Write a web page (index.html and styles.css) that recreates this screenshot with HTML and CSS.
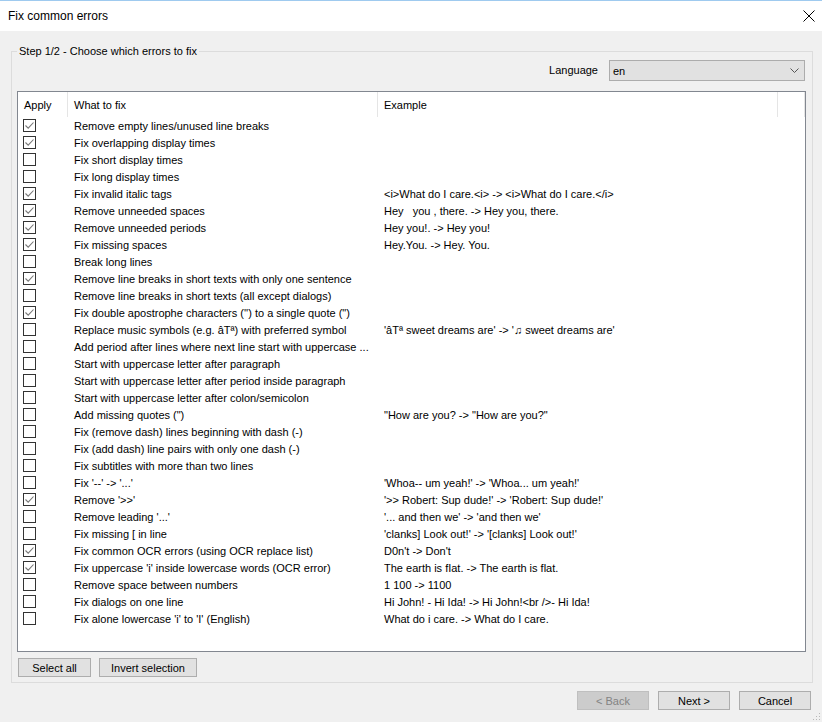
FILE: index.html
```html
<!DOCTYPE html>
<html>
<head>
<meta charset="utf-8">
<link rel="stylesheet" href="styles.css">
</head>
<body>
<div class="window">
  <div class="titlebar">
    <span class="title">Fix common errors</span>
    <svg class="close" width="12" height="12" viewBox="0 0 12 12"><path d="M0.5 0.5 L11.5 11.5 M11.5 0.5 L0.5 11.5" stroke="#000" stroke-width="1" fill="none"/></svg>
  </div>
  <div class="content">
    <div class="group">
      <span class="legend">Step 1/2 - Choose which errors to fix</span>
      <div class="lang-row">
        <span class="lang-label">Language</span>
        <div class="combo"><span>en</span>
          <svg width="9" height="5" viewBox="0 0 9 5"><path d="M0.5 0.5 L4.5 4.5 L8.5 0.5" stroke="#555" fill="none"/></svg>
        </div>
      </div>
      <div class="list">
        <div class="header">
          <div class="hcell c1">Apply</div>
          <div class="hcell c2">What to fix</div>
          <div class="hcell c3">Example</div>
          <div class="hcell c4"></div>
        </div>
        <div class="rows" id="rows"></div>
      </div>
      <div class="list-buttons">
        <button class="btn b-select">Select all</button>
        <button class="btn b-invert">Invert selection</button>
      </div>
    </div>
    <div class="footer">
      <button class="btn disabled">&lt; Back</button>
      <button class="btn">Next &gt;</button>
      <button class="btn">Cancel</button>
    </div>
  </div>
  <div class="grip"></div>
</div>
<script src="app.js"></script>
</body>
</html>
```
FILE: app.js
```js
const data = [
  [1, "Remove empty lines/unused line breaks", ""],
  [1, "Fix overlapping display times", ""],
  [0, "Fix short display times", ""],
  [0, "Fix long display times", ""],
  [1, "Fix invalid italic tags", "<i>What do I care.<i> -> <i>What do I care.</i>"],
  [1, "Remove unneeded spaces", "Hey   you , there. -> Hey you, there."],
  [1, "Remove unneeded periods", "Hey you!. -> Hey you!"],
  [1, "Fix missing spaces", "Hey.You. -> Hey. You."],
  [0, "Break long lines", ""],
  [1, "Remove line breaks in short texts with only one sentence", ""],
  [0, "Remove line breaks in short texts (all except dialogs)", ""],
  [1, "Fix double apostrophe characters ('') to a single quote (\")", ""],
  [0, "Replace music symbols (e.g. âTª) with preferred symbol", "'âTª sweet dreams are' -> '♫ sweet dreams are'"],
  [0, "Add period after lines where next line start with uppercase ...", ""],
  [0, "Start with uppercase letter after paragraph", ""],
  [0, "Start with uppercase letter after period inside paragraph", ""],
  [0, "Start with uppercase letter after colon/semicolon", ""],
  [0, "Add missing quotes (\")", "\"How are you? -> \"How are you?\""],
  [0, "Fix (remove dash) lines beginning with dash (-)", ""],
  [0, "Fix (add dash) line pairs with only one dash (-)", ""],
  [0, "Fix subtitles with more than two lines", ""],
  [0, "Fix '--' -> '...'", "'Whoa-- um yeah!' -> 'Whoa... um yeah!'"],
  [1, "Remove '>>'", "'>> Robert: Sup dude!' -> 'Robert: Sup dude!'"],
  [0, "Remove leading '...'", "'... and then we' -> 'and then we'"],
  [0, "Fix missing [ in line", "'clanks] Look out!' -> '[clanks] Look out!'"],
  [1, "Fix common OCR errors (using OCR replace list)", "D0n't -> Don't"],
  [1, "Fix uppercase 'i' inside lowercase words (OCR error)", "The earth is fIat. -> The earth is flat."],
  [0, "Remove space between numbers", "1 100 -> 1100"],
  [0, "Fix dialogs on one line", "Hi John! - Hi Ida! -> Hi John!<br />- Hi Ida!"],
  [0, "Fix alone lowercase 'i' to 'I' (English)", "What do i care. -> What do I care."]
];
const rows = document.getElementById('rows');
const check = '<svg width="11" height="11" viewBox="0 0 11 11"><path d="M1.5 5.5 L4.2 8.2 L9.5 2.5" stroke="#777" stroke-width="1.1" fill="none"/></svg>';
for (const [c, what, ex] of data) {
  const r = document.createElement('div');
  r.className = 'row';
  const cb = document.createElement('div');
  cb.className = 'cell c1';
  cb.innerHTML = '<span class="cb">' + (c ? check : '') + '</span>';
  const w = document.createElement('div');
  w.className = 'cell c2';
  w.textContent = what;
  const e = document.createElement('div');
  e.className = 'cell c3 ex';
  e.textContent = ex;
  r.append(cb, w, e);
  rows.appendChild(r);
}
```
FILE: styles.css
```css
* { box-sizing: border-box; }
html, body { margin: 0; padding: 0; }
body {
  width: 822px;
  height: 722px;
  background: #f0f0f0;
  font-family: "Liberation Sans", Arial, sans-serif;
  font-size: 11px;
  color: #000;
  overflow: hidden;
}
.window {
  position: relative;
  width: 822px;
  height: 722px;
  display: flex;
  flex-direction: column;
}
.titlebar {
  height: 31px;
  background: #fff;
  border-top: 1px solid #9fcaef;
  display: flex;
  align-items: center;
  justify-content: space-between;
  padding: 0 8px 1px 8px;
}
.title {
  font-family: "Liberation Sans", Arial, sans-serif;
  font-size: 12px;
  color: #000;
}
.close { margin-right: -1px; }
.content {
  flex: 1;
  padding: 20px 10px 0 11px;
}
.group {
  position: relative;
  width: 802px;
  height: 632px;
  border: 1px solid #dcdcdc;
  padding: 8px 5px 5px 5px;
  display: flex;
  flex-direction: column;
}
.legend {
  position: absolute;
  left: 5px;
  top: -8px;
  background: #f0f0f0;
  padding: 0 2px 0 2px;
  line-height: 14px;
  font-size: 11px;
}
.lang-row {
  display: flex;
  justify-content: flex-end;
  align-items: center;
  gap: 11px;
  padding-right: 2px;
  height: 21px;
}
.lang-label { margin-top: -2px; }
.combo {
  width: 196px;
  height: 21px;
  background: #e1e1e1;
  border: 1px solid #acacac;
  display: flex;
  align-items: center;
  justify-content: space-between;
  padding: 0 5px 0 3px;
}
.list {
  margin-top: 10px;
  width: 789px;
  height: 561px;
  border: 1px solid #828790;
  background: #fff;
}
.header {
  display: flex;
  height: 25px;
}
.hcell {
  display: flex;
  align-items: center;
  padding-left: 6px;
  padding-top: 1px;
  border-right: 1px solid #e5e5e5;
  height: 25px;
}
.c1 { width: 50px; }
.c2 { width: 310px; }
.c3 { width: 400px; }
.c4 { width: 27px; }
.rows { display: flex; flex-direction: column; }
.row {
  display: flex;
  height: 17px;
  align-items: center;
}
.cell { white-space: pre; overflow: hidden; height: 17px; display: flex; align-items: center; }
.row .c1 { padding-left: 5px; }
.row .c2 { padding-left: 6px; }
.row .c3 { padding-left: 6px; }
.cb {
  width: 13px;
  height: 13px;
  border: 1px solid #333;
  background: #fff;
  display: flex;
  align-items: center;
  justify-content: center;
}
.list-buttons {
  margin-top: 6px;
  display: flex;
  gap: 8px;
  padding-left: 1px;
}
.btn {
  height: 19px;
  background: #e1e1e1;
  border: 1px solid #adadad;
  font-family: "Liberation Sans", Arial, sans-serif;
  font-size: 11px;
  color: #000;
  padding: 0;
  margin: 0;
}
.b-select { width: 73px; }
.b-invert { width: 98px; }
.footer {
  display: flex;
  justify-content: flex-end;
  gap: 9px;
  margin-top: 8px;
  width: 800px;
}
.footer .btn { width: 72px; }
.btn.disabled {
  background: #cccccc;
  border-color: #bfbfbf;
  color: #838383;
}
.grip {
  position: absolute;
  right: 2px;
  bottom: 2px;
  width: 8px;
  height: 8px;
  background:
    radial-gradient(circle, #b8b8b8 0.8px, transparent 1px) 0 0 / 3px 3px;
  clip-path: polygon(100% 0, 100% 100%, 0 100%);
}
```
